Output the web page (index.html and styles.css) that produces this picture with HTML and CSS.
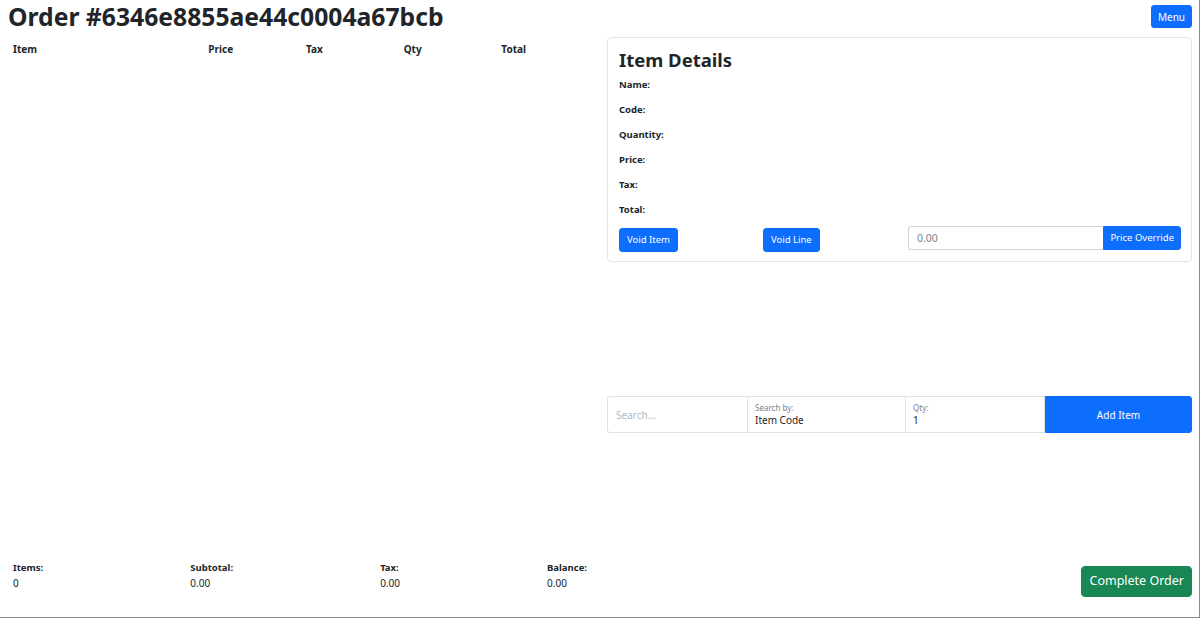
FILE: index.html
```html
<!DOCTYPE html>
<html lang="en">
<head>
<meta charset="utf-8">
<title>Order #6346e8855ae44c0004a67bcb</title>
<link rel="stylesheet" href="styles.css">
</head>
<body>
<div class="page">
  <header class="topbar">
    <h1 class="title">Order #6346e8855ae44c0004a67bcb</h1>
    <button class="btn btn-primary btn-menu">Menu</button>
  </header>
  <main class="main">
    <section class="left">
      <div class="table-head">
        <div class="th">Item</div>
        <div class="th">Price</div>
        <div class="th">Tax</div>
        <div class="th">Qty</div>
        <div class="th">Total</div>
      </div>
      <div class="totals">
        <div class="tot"><div class="tot-label">Items:</div><div class="tot-val">0</div></div>
        <div class="tot"><div class="tot-label">Subtotal:</div><div class="tot-val">0.00</div></div>
        <div class="tot"><div class="tot-label">Tax:</div><div class="tot-val">0.00</div></div>
        <div class="tot"><div class="tot-label">Balance:</div><div class="tot-val">0.00</div></div>
      </div>
    </section>
    <section class="right">
      <div class="card">
        <h2 class="card-title">Item Details</h2>
        <div class="detail">Name:</div>
        <div class="detail">Code:</div>
        <div class="detail">Quantity:</div>
        <div class="detail">Price:</div>
        <div class="detail">Tax:</div>
        <div class="detail">Total:</div>
        <div class="actions">
          <div><button class="btn btn-primary btn-sm">Void Item</button></div>
          <div><button class="btn btn-primary btn-sm">Void Line</button></div>
          <div class="input-group">
            <input class="form-input" type="text" placeholder="0.00">
            <button class="btn btn-primary btn-sm btn-attached">Price Override</button>
          </div>
        </div>
      </div>
      <div class="searchbar">
        <div class="seg seg-search"><input class="plain-input" type="text" placeholder="Search..."></div>
        <div class="seg seg-float"><span class="float-label">Search by:</span><span class="float-value">Item Code</span></div>
        <div class="seg seg-float"><span class="float-label">Qty:</span><span class="float-value">1</span></div>
        <button class="btn btn-primary btn-add">Add Item</button>
      </div>
      <div class="complete-row">
        <button class="btn btn-success btn-complete">Complete Order</button>
      </div>
    </section>
  </main>
</div>
</body>
</html>
```
FILE: styles.css
```css
* { box-sizing: border-box; }
html, body { margin: 0; padding: 0; background: #fff; }
body {
  font-family: "Noto Sans", "Open Sans", sans-serif;
  color: #212529;
}
.page {
  width: 1200px;
  height: 618px;
  border-right: 1px solid #8c8c8c;
  border-bottom: 1px solid #8c8c8c;
  padding: 0 7px 0 8px;
  display: flex;
  flex-direction: column;
  overflow: hidden;
}
.topbar {
  display: flex;
  justify-content: space-between;
  align-items: flex-start;
  height: 37px;
}
.title {
  margin: 0;
  font-size: 24.7px;
  font-weight: 700;
  line-height: 34px;
  letter-spacing: 0;
}
.btn {
  font-family: inherit;
  border: 1px solid transparent;
  border-radius: 3px;
  cursor: pointer;
  line-height: 1;
}
.btn-primary { background: #0d6efd; color: #fff; border-color: #0d6efd; }
.btn-success { background: #198754; color: #fff; border-color: #198754; }
.btn-menu {
  margin-top: 5px;
  height: 23px;
  padding: 0 6px;
  font-size: 10px;
}
.main {
  flex: 1;
  display: grid;
  grid-template-columns: 586px 1fr;
  column-gap: 13px;
  min-height: 0;
}
.left {
  display: flex;
  flex-direction: column;
  justify-content: space-between;
  padding-bottom: 26px;
}
.table-head {
  display: grid;
  grid-template-columns: 2fr 1fr 1fr 1fr 1fr;
  padding-top: 6px;
}
.th {
  font-size: 10px;
  font-weight: 700;
  padding: 0 5px;
  line-height: 13px;
}
.totals {
  display: flex;
  justify-content: space-between;
  padding: 0 7px 0 5px;
}
.tot-label {
  font-size: 9.5px;
  font-weight: 700;
  line-height: 14px;
}
.tot-val {
  font-size: 10px;
  line-height: 16px;
  color: #212529;
}
.right {
  display: flex;
  flex-direction: column;
}
.card {
  border: 1px solid #e1e3e6;
  border-radius: 4px;
  padding: 10px 10px 10px 11px;
  height: 225px;
}
.card-title {
  margin: 0 0 6px 0;
  font-size: 18.5px;
  font-weight: 700;
  line-height: 24px;
}
.detail {
  font-size: 9.5px;
  font-weight: 700;
  height: 25px;
  line-height: 13px;
}
.actions {
  display: grid;
  grid-template-columns: 144px 145px 1fr;
  margin-top: -2px;
}
.btn-sm {
  height: 24px;
  padding: 0 7px;
  font-size: 9.5px;
}
.input-group {
  display: flex;
  height: 24px;
}
.form-input {
  flex: 1;
  min-width: 0;
  border: 1px solid #ced4da;
  border-right: 0;
  border-radius: 3px 0 0 3px;
  padding: 0 8px;
  font-family: inherit;
  font-size: 10.5px;
  color: #212529;
  outline: none;
}
.form-input::placeholder { color: #7a8188; }
.btn-attached {
  border-radius: 0 3px 3px 0;
  padding: 0 6px;
}
.searchbar {
  margin-top: 134px;
  display: grid;
  grid-template-columns: 140px 158px 139px 1fr;
  height: 37px;
  border: 1px solid #dee2e6;
  border-right: 0;
  border-radius: 3px;
}
.seg {
  border-right: 1px solid #dee2e6;
  min-width: 0;
}
.seg-search { display: flex; align-items: center; }
.plain-input {
  width: 100%;
  border: 0;
  outline: none;
  padding: 0 8px;
  font-family: inherit;
  font-size: 10px;
  background: transparent;
}
.plain-input::placeholder { color: #b2b8be; }
.seg-float {
  display: flex;
  flex-direction: column;
  padding: 5px 7px 0;
}
.float-label {
  font-size: 8px;
  color: #7a8188;
  line-height: 11px;
}
.float-value {
  font-size: 10px;
  line-height: 15px;
  color: #212529;
}
.btn-add {
  border-radius: 0 3px 3px 0;
  font-size: 10px;
  height: 37px;
  margin-top: -1px;
}
.complete-row {
  flex: 1;
  display: flex;
  justify-content: flex-end;
  align-items: flex-end;
  padding-bottom: 20px;
}
.btn-complete {
  height: 31px;
  padding: 0 7px;
  font-size: 12.5px;
  border-radius: 4px;
}
```
